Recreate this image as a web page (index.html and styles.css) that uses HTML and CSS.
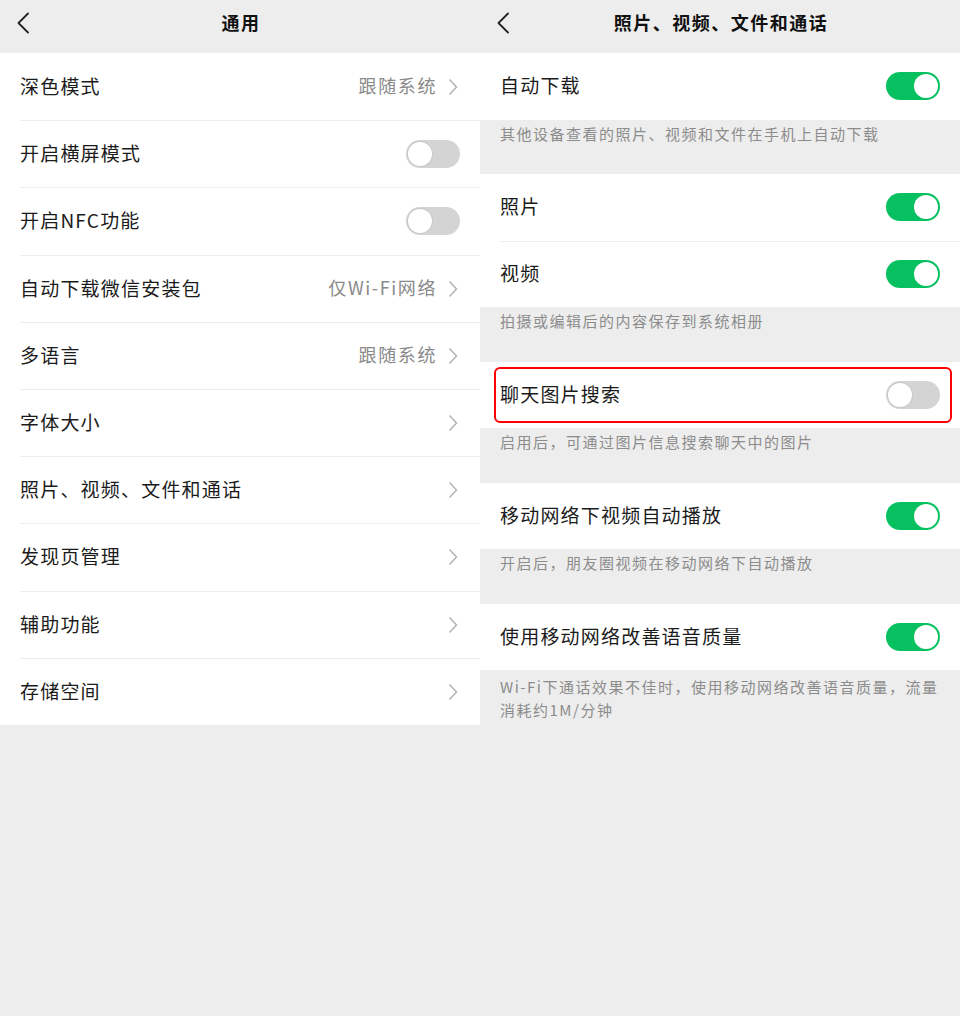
FILE: index.html
```html
<!DOCTYPE html>
<html lang="zh-CN">
<head>
<meta charset="utf-8">
<title>通用 / 照片、视频、文件和通话</title>
<link rel="stylesheet" href="styles.css">
</head>
<body>
<div class="screen">
  <section class="panel">
    <header class="nav">
      <svg class="back" width="14" height="22" viewBox="0 0 14 22"><path d="M12 1.5 L2.5 11 L12 20.5" fill="none" stroke="#222" stroke-width="1.8" stroke-linecap="round" stroke-linejoin="round"/></svg>
      <h1 class="title">通用</h1>
      <span></span>
    </header>
    <div class="group left">
      <div class="cell"><div class="inner arrow"><span class="label">深色模式</span><span class="value">跟随系统</span><svg class="chev" width="10" height="18" viewBox="0 0 10 18"><path d="M1.5 1.5 L8.5 9 L1.5 16.5" fill="none" stroke="#b3b3b3" stroke-width="1.5"/></svg></div></div>
      <div class="cell"><div class="inner"><span class="label">开启横屏模式</span><span class="switch off"><span class="knob"></span></span></div></div>
      <div class="cell"><div class="inner"><span class="label">开启NFC功能</span><span class="switch off"><span class="knob"></span></span></div></div>
      <div class="cell"><div class="inner arrow"><span class="label">自动下载微信安装包</span><span class="value">仅Wi-Fi网络</span><svg class="chev" width="10" height="18" viewBox="0 0 10 18"><path d="M1.5 1.5 L8.5 9 L1.5 16.5" fill="none" stroke="#b3b3b3" stroke-width="1.5"/></svg></div></div>
      <div class="cell"><div class="inner arrow"><span class="label">多语言</span><span class="value">跟随系统</span><svg class="chev" width="10" height="18" viewBox="0 0 10 18"><path d="M1.5 1.5 L8.5 9 L1.5 16.5" fill="none" stroke="#b3b3b3" stroke-width="1.5"/></svg></div></div>
      <div class="cell"><div class="inner arrow"><span class="label">字体大小</span><svg class="chev" width="10" height="18" viewBox="0 0 10 18"><path d="M1.5 1.5 L8.5 9 L1.5 16.5" fill="none" stroke="#b3b3b3" stroke-width="1.5"/></svg></div></div>
      <div class="cell"><div class="inner arrow"><span class="label">照片、视频、文件和通话</span><svg class="chev" width="10" height="18" viewBox="0 0 10 18"><path d="M1.5 1.5 L8.5 9 L1.5 16.5" fill="none" stroke="#b3b3b3" stroke-width="1.5"/></svg></div></div>
      <div class="cell"><div class="inner arrow"><span class="label">发现页管理</span><svg class="chev" width="10" height="18" viewBox="0 0 10 18"><path d="M1.5 1.5 L8.5 9 L1.5 16.5" fill="none" stroke="#b3b3b3" stroke-width="1.5"/></svg></div></div>
      <div class="cell"><div class="inner arrow"><span class="label">辅助功能</span><svg class="chev" width="10" height="18" viewBox="0 0 10 18"><path d="M1.5 1.5 L8.5 9 L1.5 16.5" fill="none" stroke="#b3b3b3" stroke-width="1.5"/></svg></div></div>
      <div class="cell"><div class="inner arrow"><span class="label">存储空间</span><svg class="chev" width="10" height="18" viewBox="0 0 10 18"><path d="M1.5 1.5 L8.5 9 L1.5 16.5" fill="none" stroke="#b3b3b3" stroke-width="1.5"/></svg></div></div>
    </div>
  </section>

  <section class="panel">
    <header class="nav">
      <svg class="back" width="14" height="22" viewBox="0 0 14 22"><path d="M12 1.5 L2.5 11 L12 20.5" fill="none" stroke="#222" stroke-width="1.8" stroke-linecap="round" stroke-linejoin="round"/></svg>
      <h1 class="title">照片、视频、文件和通话</h1>
      <span></span>
    </header>

    <div class="group right">
      <div class="cell"><div class="inner"><span class="label">自动下载</span><span class="switch on"><span class="knob"></span></span></div></div>
    </div>
    <p class="desc">其他设备查看的照片、视频和文件在手机上自动下载</p>

    <div class="group right">
      <div class="cell"><div class="inner"><span class="label">照片</span><span class="switch on"><span class="knob"></span></span></div></div>
      <div class="cell"><div class="inner"><span class="label">视频</span><span class="switch on"><span class="knob"></span></span></div></div>
    </div>
    <p class="desc">拍摄或编辑后的内容保存到系统相册</p>

    <div class="group right">
      <div class="cell highlighted"><div class="inner"><span class="label">聊天图片搜索</span><span class="switch off"><span class="knob"></span></span></div></div>
    </div>
    <p class="desc">启用后，可通过图片信息搜索聊天中的图片</p>

    <div class="group right">
      <div class="cell"><div class="inner"><span class="label">移动网络下视频自动播放</span><span class="switch on"><span class="knob"></span></span></div></div>
    </div>
    <p class="desc">开启后，朋友圈视频在移动网络下自动播放</p>

    <div class="group right">
      <div class="cell"><div class="inner"><span class="label">使用移动网络改善语音质量</span><span class="switch on"><span class="knob"></span></span></div></div>
    </div>
    <p class="desc last">Wi-Fi下通话效果不佳时，使用移动网络改善语音质量，流量<br>消耗约1M/分钟</p>
  </section>
</div>
</body>
</html>
```

FILE: styles.css
```css
* { box-sizing: border-box; }

html, body {
  margin: 0;
  padding: 0;
  background: #ededed;
}

body {
  font-family: "Noto Sans CJK SC", "Noto Sans", sans-serif;
  color: #1b1b1b;
}

.screen {
  display: grid;
  grid-template-columns: 480px 480px;
  width: 960px;
  min-height: 1016px;
  background: #ededed;
}

.panel {
  display: flex;
  flex-direction: column;
}

.nav {
  height: 53px;
  padding-bottom: 7px;
  display: grid;
  grid-template-columns: 48px 1fr 48px;
  align-items: center;
  background: #ededed;
}

.back {
  margin-left: 16px;
}

.title {
  margin: 0;
  text-align: center;
  font-size: 18px;
  font-weight: 700;
  letter-spacing: 1.5px;
  color: #111;
  line-height: 1;
  padding-left: 2px;
  margin-top: -3px;
}

.group {
  background: #fff;
}

.cell {
  padding-left: 20px;
  display: flex;
}

.left .cell { height: 67.2px; }
.right .cell { height: 66.5px; }

.inner {
  flex: 1;
  display: flex;
  align-items: center;
  padding-right: 20px;
  border-top: 1px solid #ececec;
}

.cell:first-child .inner { border-top: none; }

.inner.arrow { padding-right: 22px; }

.label {
  flex: 1;
  font-size: 19px;
  letter-spacing: 1.2px;
  line-height: 1;
  color: #1b1b1b;
  margin-bottom: 3px;
}

.value {
  font-size: 18px;
  letter-spacing: 1.6px;
  color: #8a8a8a;
  line-height: 1;
  margin-right: 11px;
  margin-bottom: 3px;
}

.chev { display: block; }

.switch {
  width: 54px;
  height: 28px;
  border-radius: 14px;
  padding: 2px;
  display: flex;
}

.switch.on {
  background: #07c160;
  justify-content: flex-end;
}

.switch.off {
  background: #d4d4d4;
  justify-content: flex-start;
}

.knob {
  width: 24px;
  height: 24px;
  border-radius: 50%;
  background: #fff;
}

.switch.off .knob {
  box-shadow: 0 0 0 1px #c8c8c8;
}

.desc {
  margin: 0;
  height: 54.5px;
  padding: 2px 20px 0 20px;
  font-size: 15px;
  letter-spacing: 1.5px;
  line-height: 23px;
  color: #8c8c8c;
}

.desc.last {
  height: auto;
  padding-top: 5px;
  padding-bottom: 14px;
}

.highlighted {
  position: relative;
}

.highlighted::after {
  content: "";
  position: absolute;
  left: 14px;
  right: 8px;
  top: 5px;
  bottom: 5px;
  border: 2px solid #ff0000;
  border-radius: 6px;
  pointer-events: none;
}
```
